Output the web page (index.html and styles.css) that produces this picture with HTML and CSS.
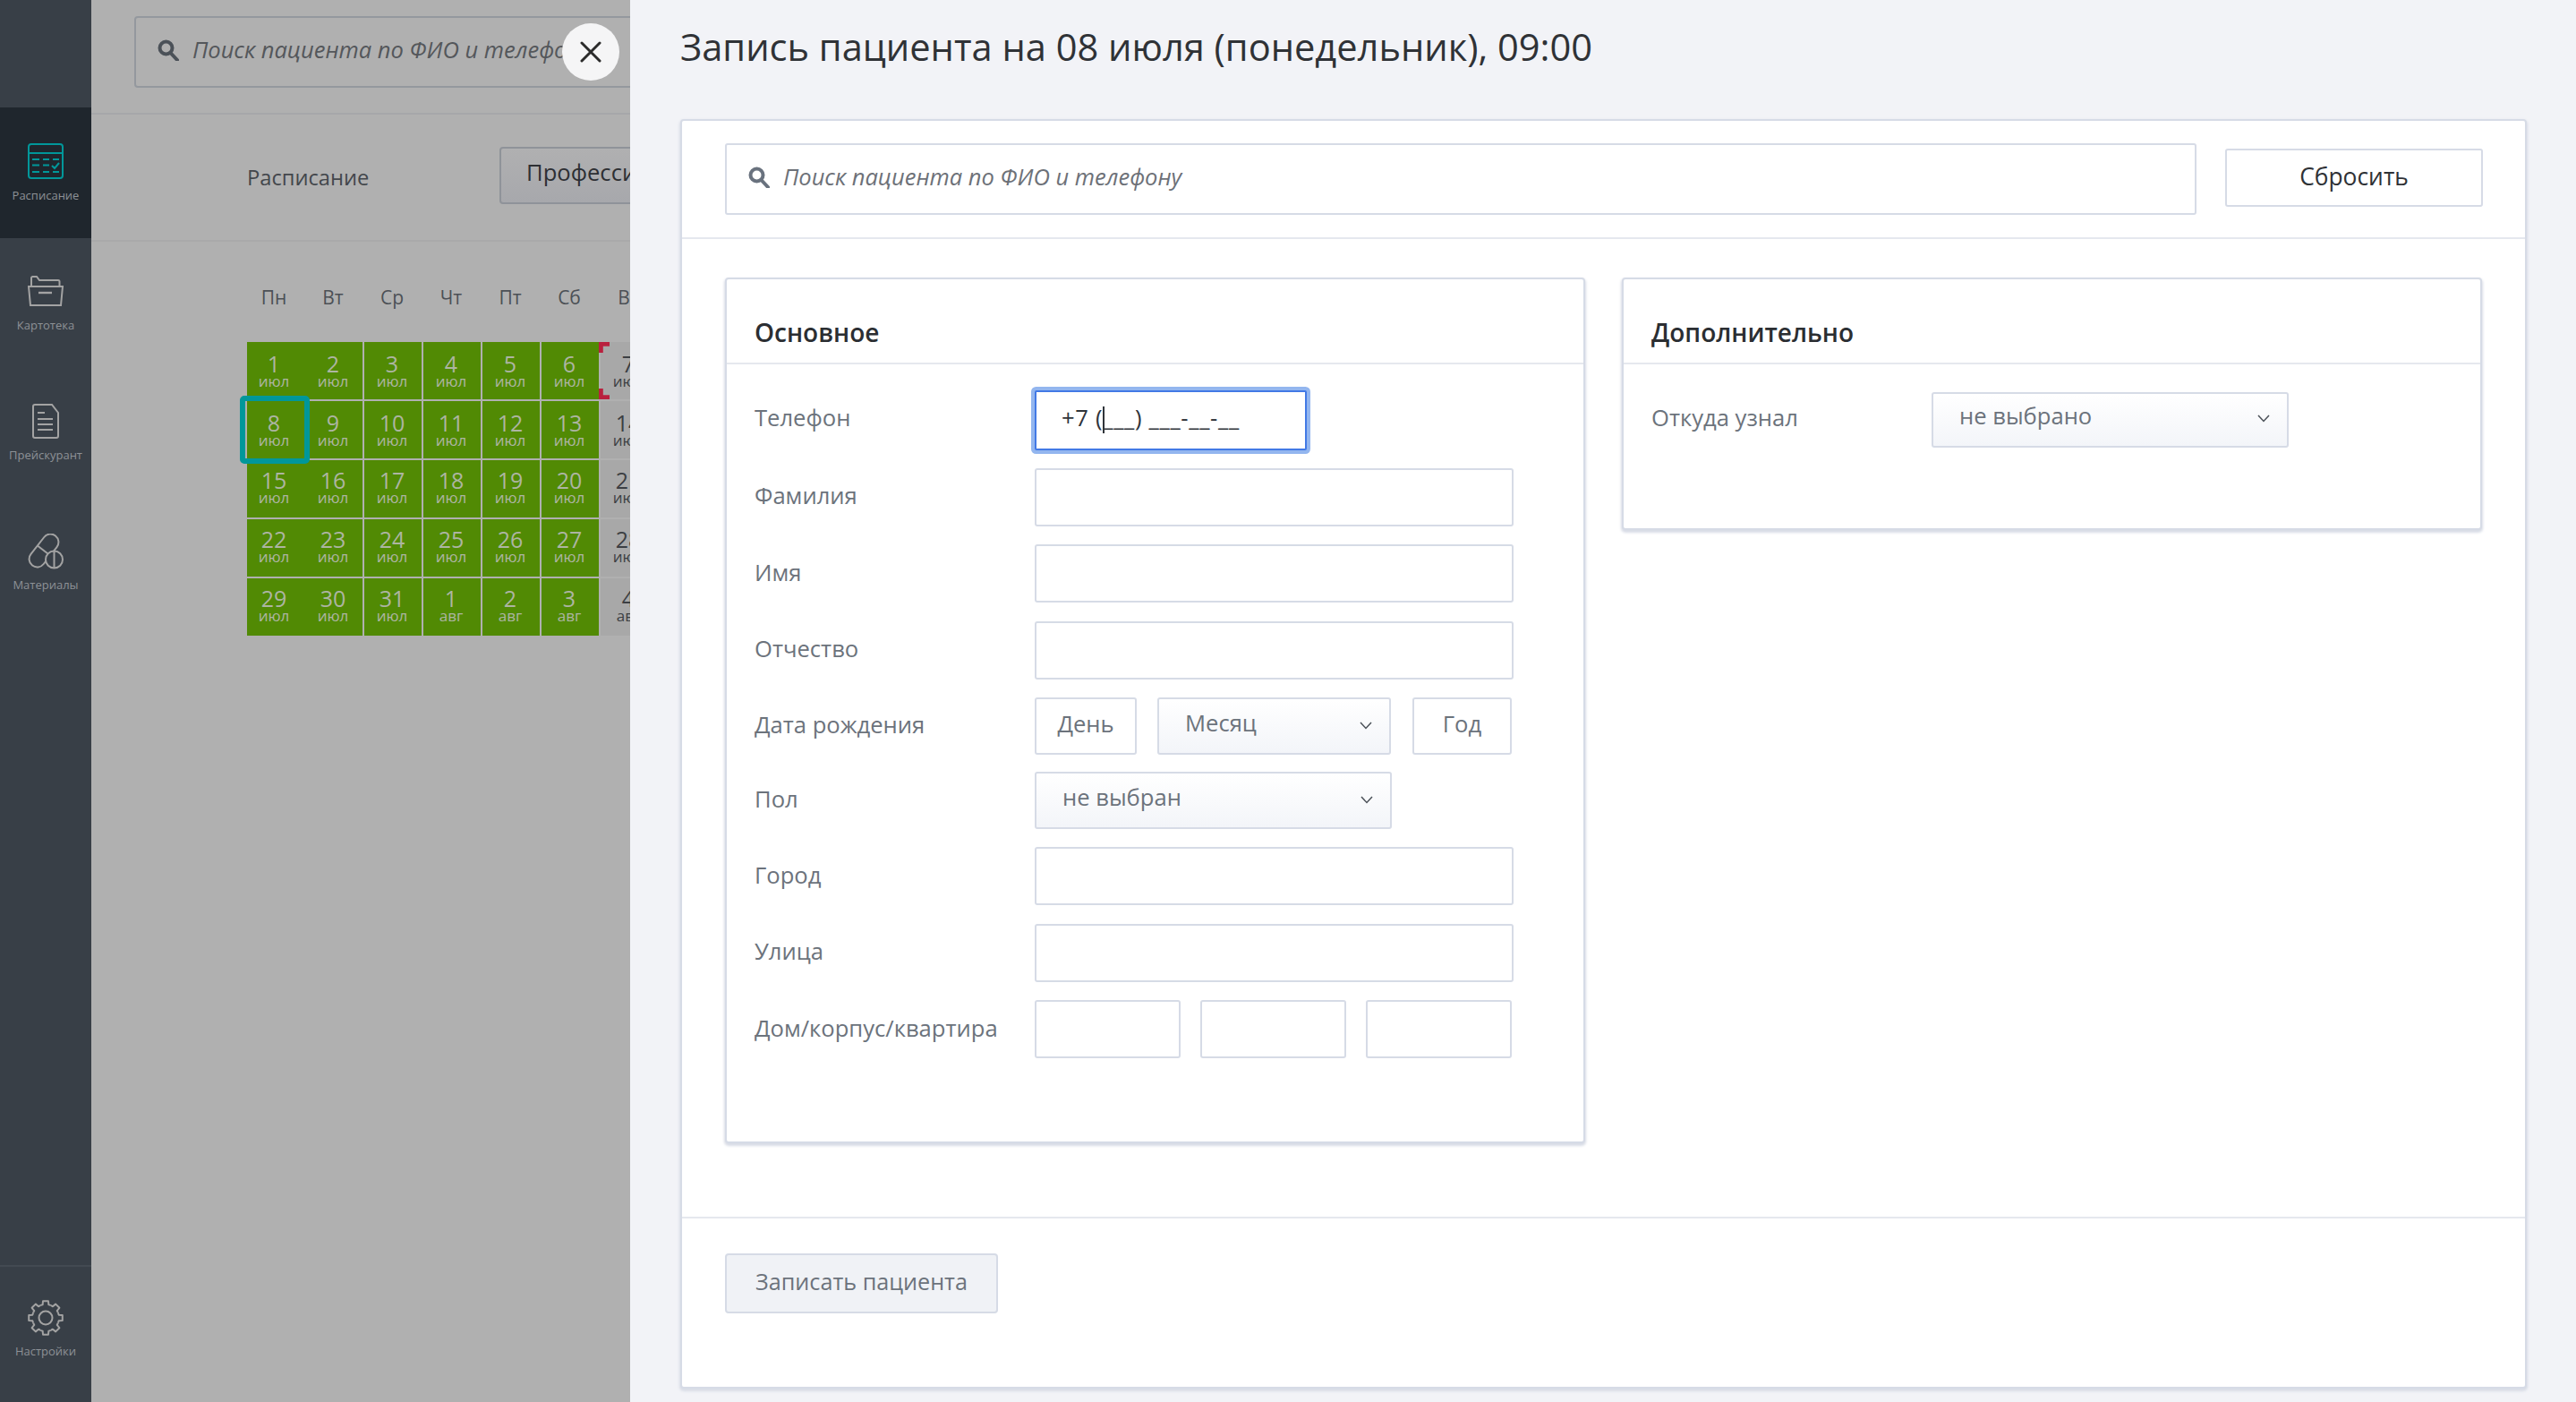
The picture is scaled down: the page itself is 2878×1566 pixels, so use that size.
FILE: index.html
```html
<!DOCTYPE html>
<html lang="ru">
<head>
<meta charset="utf-8">
<title>Запись пациента</title>
<link rel="stylesheet" href="styles.css">
</head>
<body>
<div class="app">
  <nav class="sidebar">
    <div class="nav-top"></div>
    <a class="nav-item nav-item--active">
      <svg class="nav-icon" viewBox="0 0 40 40" fill="none" stroke="#00979a" stroke-width="2"><rect x="1" y="1" width="38" height="38" rx="3"/><path d="M1 11h38"/><path d="M5 18h8M17 18h7M28 18h7M5 24.500h8M17 24.500h7M27 25l3 3 5-6M5 32h8M17 32h7M28 32h7" stroke-width="2"/></svg>
      <span>Расписание</span>
    </a>
    <a class="nav-item">
      <svg class="nav-icon" viewBox="0 0 40 40" fill="none" stroke="#a3a3a3" stroke-width="2"><path d="M4 13V4.500A1.500 1.500 0 0 1 5.500 3H10l3 4h21a1.500 1.500 0 0 1 1.500 1.500V13"/><path d="M1 14h38l-2 21H3z"/><path d="M12 21h15" stroke-width="2.400"/></svg>
      <span>Картотека</span>
    </a>
    <a class="nav-item">
      <svg class="nav-icon" viewBox="0 0 40 40" fill="none" stroke="#a3a3a3" stroke-width="2"><path d="M6 3a2 2 0 0 1 2-2h19l7 9v26a2 2 0 0 1-2 2H8a2 2 0 0 1-2-2z"/><path d="M11 10h8M11 17h17M11 23h17M11 29h17"/></svg>
      <span>Прейскурант</span>
    </a>
    <a class="nav-item">
      <svg class="nav-icon" viewBox="0 0 40 40" fill="none" stroke="#a3a3a3" stroke-width="2"><rect x="-9" y="-21" width="18" height="42" rx="9" transform="translate(18 19) rotate(38)"/><path d="M10.900 13.500 25.100 24.500"/><circle cx="29.500" cy="29" r="9.500" fill="#383f47"/><path d="M29.500 19.500v19"/></svg>
      <span>Материалы</span>
    </a>
    <a class="nav-item nav-item--bottom">
      <svg class="nav-icon" viewBox="-20 -20 40 40" fill="none" stroke="#a3a3a3" stroke-width="2" stroke-linejoin="round">
        <defs><path id="tooth" d="M-5.740-13.860A15 15 0 0 1-3.370-14.620L-2.970-18.770 2.970-18.770 3.370-14.620A15 15 0 0 1 5.740-13.860"/></defs>
        <use href="#tooth"/><use href="#tooth" transform="rotate(45)"/><use href="#tooth" transform="rotate(90)"/><use href="#tooth" transform="rotate(135)"/><use href="#tooth" transform="rotate(180)"/><use href="#tooth" transform="rotate(225)"/><use href="#tooth" transform="rotate(270)"/><use href="#tooth" transform="rotate(315)"/>
        <circle r="7.500"/>
      </svg>
      <span>Настройки</span>
    </a>
  </nav>

  <main class="main">
    <header class="main-head">
      <div class="main-search">
        <svg class="search-icon" viewBox="0 0 24 24" fill="none" stroke="#4b5158" stroke-width="4"><circle cx="9.500" cy="9.500" r="7"/><path d="M14.500 15 22 23" stroke-linecap="round"/></svg>
        <span>Поиск пациента по ФИО и телефону</span>
      </div>
    </header>
    <div class="toolbar">
      <span class="toolbar-label">Расписание</span>
      <span class="toolbar-btn">Профессия</span>
    </div>
    <section class="calendar">
      <div class="weekdays"><span>Пн</span><span>Вт</span><span>Ср</span><span>Чт</span><span>Пт</span><span>Сб</span><span>Вс</span></div>
      <div class="cal-row">
        <div class="day"><b>1</b><i>июл</i></div><div class="day"><b>2</b><i>июл</i></div><div class="day"><b>3</b><i>июл</i></div><div class="day"><b>4</b><i>июл</i></div><div class="day"><b>5</b><i>июл</i></div><div class="day"><b>6</b><i>июл</i></div>
        <div class="day day--off day--marked"><b>7</b><i>июл</i></div>
      </div>
      <div class="cal-row cal-row--active">
        <div class="day day--selected"><b>8</b><i>июл</i></div><div class="day"><b>9</b><i>июл</i></div><div class="day"><b>10</b><i>июл</i></div><div class="day"><b>11</b><i>июл</i></div><div class="day"><b>12</b><i>июл</i></div><div class="day"><b>13</b><i>июл</i></div>
        <div class="day day--off"><b>14</b><i>июл</i></div>
      </div>
      <div class="cal-row cal-row--tight">
        <div class="day"><b>15</b><i>июл</i></div><div class="day"><b>16</b><i>июл</i></div><div class="day"><b>17</b><i>июл</i></div><div class="day"><b>18</b><i>июл</i></div><div class="day"><b>19</b><i>июл</i></div><div class="day"><b>20</b><i>июл</i></div>
        <div class="day day--off"><b>21</b><i>июл</i></div>
      </div>
      <div class="cal-row cal-row--tight">
        <div class="day"><b>22</b><i>июл</i></div><div class="day"><b>23</b><i>июл</i></div><div class="day"><b>24</b><i>июл</i></div><div class="day"><b>25</b><i>июл</i></div><div class="day"><b>26</b><i>июл</i></div><div class="day"><b>27</b><i>июл</i></div>
        <div class="day day--off"><b>28</b><i>июл</i></div>
      </div>
      <div class="cal-row cal-row--tight">
        <div class="day"><b>29</b><i>июл</i></div><div class="day"><b>30</b><i>июл</i></div><div class="day"><b>31</b><i>июл</i></div><div class="day"><b>1</b><i>авг</i></div><div class="day"><b>2</b><i>авг</i></div><div class="day"><b>3</b><i>авг</i></div>
        <div class="day day--off"><b>4</b><i>авг</i></div>
      </div>
    </section>
  </main>
</div>

<button class="close" aria-label="Закрыть"><svg viewBox="0 0 24 24" fill="none" stroke="#2b2b2b" stroke-width="3" stroke-linecap="round"><path d="M2 2l20 20M22 2 2 22"/></svg></button>

<aside class="drawer">
  <h1 class="drawer-title">Запись пациента на 08 июля (понедельник), 09:00</h1>
  <div class="card">
    <div class="card-top">
      <div class="search">
        <svg class="search-icon search-icon--light" viewBox="0 0 24 24" fill="none" stroke="#69727e" stroke-width="4"><circle cx="9.500" cy="9.500" r="7"/><path d="M14.500 15 22 23" stroke-linecap="round"/></svg>
        <span>Поиск пациента по ФИО и телефону</span>
      </div>
      <button class="btn-reset">Сбросить</button>
    </div>
    <div class="panels">
      <section class="panel panel--main">
        <h2 class="panel-title">Основное</h2>
        <div class="panel-body">
          <div class="row row--phone">
            <label>Телефон</label>
            <div class="phone">+7 (<span class="caret"></span>___) ___-__-__</div>
          </div>
          <div class="row"><label>Фамилия</label><div class="input input--wide"></div></div>
          <div class="row"><label>Имя</label><div class="input input--wide"></div></div>
          <div class="row"><label>Отчество</label><div class="input input--wide"></div></div>
          <div class="row row--date">
            <label>Дата рождения</label>
            <div class="controls controls--date">
              <div class="input input--day">День</div>
              <div class="select select--month">Месяц<svg class="chev" viewBox="0 0 14 9" fill="none" stroke="#4b5158" stroke-width="1.500"><path d="M1 1l6 6.500L13 1"/></svg></div>
              <div class="input input--year">Год</div>
            </div>
          </div>
          <div class="row row--sex">
            <label>Пол</label>
            <div class="select select--sex">не выбран<svg class="chev" viewBox="0 0 14 9" fill="none" stroke="#4b5158" stroke-width="1.500"><path d="M1 1l6 6.500L13 1"/></svg></div>
          </div>
          <div class="row"><label>Город</label><div class="input input--wide"></div></div>
          <div class="row"><label>Улица</label><div class="input input--wide"></div></div>
          <div class="row">
            <label>Дом/корпус/квартира</label>
            <div class="controls controls--house">
              <div class="input"></div><div class="input"></div><div class="input"></div>
            </div>
          </div>
        </div>
      </section>
      <section class="panel panel--extra">
        <h2 class="panel-title">Дополнительно</h2>
        <div class="panel-body panel-body--extra">
          <div class="row row--extra">
            <label>Откуда узнал</label>
            <div class="select select--source">не выбрано<svg class="chev" viewBox="0 0 14 9" fill="none" stroke="#4b5158" stroke-width="1.500"><path d="M1 1l6 6.500L13 1"/></svg></div>
          </div>
        </div>
      </section>
    </div>
    <footer class="card-foot">
      <button class="btn-submit">Записать пациента</button>
    </footer>
  </div>
</aside>
</body>
</html>
```
FILE: styles.css
```css
*, *::before, *::after { box-sizing: border-box; }
html, body { margin: 0; height: 100%; overflow: hidden; }
body { font-family: "Open Sans", "Noto Sans", sans-serif; background: #b0b0b0; color: #2c2f33; }
button { font-family: inherit; }

.app { display: flex; height: 1566px; }

/* Sidebar */
.sidebar { width: 102px; flex: none; background: #383f47; display: flex; flex-direction: column; }
.nav-top { height: 120px; flex: none; }
.nav-item { height: 145px; flex: none; display: flex; flex-direction: column; align-items: center; padding-top: 40px; gap: 7px; color: #8d9196; font-size: 13px; line-height: 20px; white-space: nowrap; }
.nav-item--active { background: #1f262d; height: 146px; gap: 8px; }
.nav-icon { width: 40px; height: 40px; flex: none; }
.nav-item--bottom { margin-top: auto; height: 153px; border-top: 2px solid #434a52; padding-top: 37px; gap: 7px; }

/* Background page */
.main { flex: 1; min-width: 0; overflow: hidden; }
.main-head { height: 128px; padding: 18px 0 0 48px; border-bottom: 2px solid #a6a7aa; }
.main-search { height: 80px; width: 1100px; border: 2px solid #94989e; border-radius: 4px; display: flex; align-items: center; padding-left: 24px; gap: 15px; font-style: italic; font-size: 25.500px; color: #54575b; }
.main-search span, .search span { padding-bottom: 7px; }
.search-icon { width: 24px; height: 24px; flex: none; margin-top: -4px; }
.toolbar { height: 142px; padding-left: 174px; display: flex; align-items: center; border-bottom: 2px solid #a9a9aa; }
.toolbar-label { font-size: 23.700px; color: #43474c; width: 282px; flex: none; }
.toolbar-btn { height: 64px; width: 400px; margin-top: -4px; flex: none; border: 2px solid #8f9399; border-radius: 4px; background: linear-gradient(#b0b0b1, #a7a8ac); padding-left: 28px; line-height: 54px; font-size: 25.600px; color: #2d2f33; }

.calendar { padding: 0 0 0 174px; }
.weekdays { display: grid; grid-template-columns: 63px repeat(6, 66px); height: 112px; align-items: start; padding-top: 48px; font-size: 21px; line-height: 28px; color: #4c5056; text-align: center; }
.weekdays span:first-child { padding-right: 3px; }
.cal-row { display: grid; grid-template-columns: 63px repeat(6, 66px); height: 66px; position: relative; }
.cal-row--active { z-index: 1; }
.day { height: 64px; background: #518a04; color: #adb5a2; text-align: center; position: relative; box-shadow: inset 2px 0 0 #b0b0b0; padding-top: 10px; }
.day:first-child { box-shadow: none; padding-right: 3px; }
.day:nth-child(2) { box-shadow: none; }
.day b { display: block; font-weight: 400; font-size: 25px; line-height: 28px; }
.day i { display: block; font-style: normal; font-size: 17px; line-height: 12px; }
.cal-row--tight .day { padding-top: 8px; }
.day--off { background: #a8a8a8; color: #3c3f43; }
.day--marked::before, .day--marked::after { content: ""; position: absolute; left: 0; width: 12px; height: 12px; background: #b9203e; clip-path: polygon(0 0, 100% 0, 100% 40%, 40% 40%, 40% 100%, 0 100%); }
.day--marked::before { top: 0; }
.day--marked::after { bottom: 0; transform: scaleY(-1); }
.day--selected { z-index: 1; }
.day--selected::after { content: ""; position: absolute; left: -8px; top: -6px; width: 78px; height: 76px; border: 6px solid #00979a; border-radius: 5px; }

/* Close */
.close { position: absolute; left: 628px; top: 26px; width: 64px; height: 64px; border: 0; border-radius: 50%; background: #f5f5f6; padding: 20px; z-index: 2; }
.close svg { display: block; width: 24px; height: 24px; }

/* Drawer */
.drawer { position: absolute; left: 704px; top: 0; right: 0; bottom: 0; background: #f2f3f7; padding-left: 56px; z-index: 1; }
.drawer-title { margin: 0; height: 133px; padding-top: 25px; font-weight: 400; font-size: 41.600px; line-height: 54px; color: #2f3236; white-space: nowrap; }
.card { width: 2063px; height: 1418px; background: #fff; border: 2px solid #d6dbe6; border-radius: 4px; box-shadow: 0 2px 3px 1px #d8dce6; display: flex; flex-direction: column; }
.card-top { height: 132px; border-bottom: 2px solid #e5e8ee; display: flex; padding: 25px 47px 0 48px; justify-content: space-between; flex: none; }
.search { width: 1644px; height: 80px; border: 2px solid #d6dbe6; border-radius: 3px; display: flex; align-items: center; padding-left: 24px; gap: 15px; font-style: italic; font-size: 25.500px; color: #6d7178; }
.btn-reset { width: 288px; height: 65px; margin-top: 6px; background: #fff; border: 2px solid #d6dbe6; border-radius: 3px; font-size: 26.400px; color: #2f3236; padding: 0 0 4px; }

.panels { display: flex; align-items: flex-start; gap: 41px; padding: 43px 47px 0 48px; height: 1092px; flex: none; }
.panel { width: 961px; background: #fff; border: 2px solid #d6dbe6; border-radius: 4px; box-shadow: 0 2px 3px 1px #d8dce6; flex: none; }
.panel--main { height: 967px; }
.panel--extra { height: 282px; }
.panel-title { margin: 0; height: 95px; border-bottom: 2px solid #e5e8ee; padding: 40px 0 0 31px; font-weight: 600; font-size: 28px; line-height: 38px; color: #2b2e32; }
.panel-body { padding: 25px 0 0 31px; }
.panel-body--extra { padding-top: 29px; }
.row { display: flex; align-items: center; height: 65px; margin-bottom: 20.500px; }
.row label { width: 313px; flex: none; font-size: 25.600px; color: #6c737c; padding-bottom: 3px; }
.row--phone { height: 71px; margin-bottom: 19.500px; }
.row--date { margin-bottom: 19px; height: 64px; }
.row--sex { margin-bottom: 20px; height: 64px; }
.row--extra label { padding-bottom: 5px; }

.input { height: 65px; border: 2px solid #d6dbe6; border-radius: 3px; background: #fff; font-size: 25.600px; color: #6c737c; display: flex; align-items: center; justify-content: center; padding-bottom: 6px; }
.input--wide { width: 535px; }
.input--day { width: 114px; height: 64px; }
.input--year { width: 111px; height: 64px; }
.phone { align-self: flex-end; width: 304px; height: 67px; border: 2px solid #4279e5; border-radius: 2px; box-shadow: 0 0 0 4px #93b6ef; background: #fff; font-size: 25.600px; letter-spacing: .7px; line-height: 58px; padding-left: 28px; color: #30343a; white-space: pre; }
.caret { display: inline-block; width: 2px; height: 30px; background: #30343a; vertical-align: -8px; margin-right: -2px; }

.controls { display: flex; }
.controls--date { gap: 23px; }
.controls--date .input--year { margin-left: 1px; }
.controls--house { gap: 22px; }
.controls--house .input { width: 163px; }
.select { height: 64px; border: 2px solid #d6dbe6; border-radius: 3px; background: linear-gradient(#fff, #f3f5f9); font-size: 25.600px; color: #6c737c; display: flex; align-items: center; justify-content: space-between; padding: 0 19px 7px 29px; }
.select--month { width: 261px; }
.select--sex { width: 399px; }
.select--source { width: 399px; height: 62px; padding-left: 29px; padding-bottom: 8px; }
.chev { width: 14px; height: 9px; flex: none; margin-top: 6px; }

.card-foot { border-top: 2px solid #e5e8ee; padding: 39px 48px 0; }
.btn-submit { width: 305px; height: 67px; background: #f0f2f6; border: 2px solid #d6dbe6; border-radius: 4px; font-size: 25.200px; color: #6c737c; padding: 0 0 5px; }
```
